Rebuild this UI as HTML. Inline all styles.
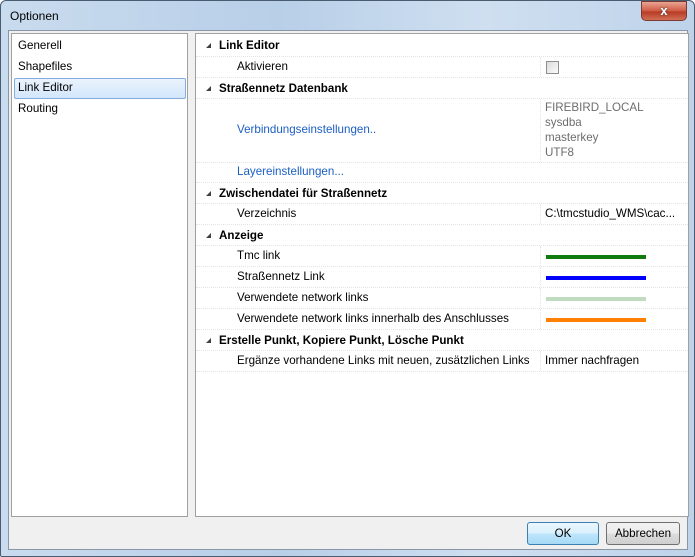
<!DOCTYPE html>
<html><head><meta charset="utf-8"><style>
*{margin:0;padding:0;box-sizing:border-box}
body{width:695px;height:557px;overflow:hidden;background:#fff;font-family:"Liberation Sans",sans-serif;font-size:11.6px;color:#000;position:relative}
.frame{position:absolute;left:0;top:0;width:695px;height:557px;border:1px solid #4a5c70;border-radius:6px 6px 2px 2px;background:linear-gradient(90deg,#c9dbee 0%,#b8cfe8 40%,#cfdff0 70%,#bed3ea 100%)}
.title{position:absolute;left:10px;top:9px;font-size:12px;color:#000}
.close{position:absolute;left:641px;top:1px;width:46px;height:20px;border:1px solid #7b3a32;border-radius:0 0 5px 5px;background:linear-gradient(#e8a493,#cf5a43 50%,#b83a25 55%,#d16f55);color:#fff;font-weight:bold;font-size:13px;text-align:center;line-height:17px;text-shadow:0 0 2px #333}
.client{position:absolute;left:8px;top:30px;width:680px;height:520px;background:#f0f0f0;border:1px solid #8896a8}
.list{position:absolute;left:11px;top:33px;width:177px;height:484px;background:#fff;border:1px solid #a0a0a0}
.li{position:absolute;left:6px;height:20px;line-height:20px}
.sel{position:absolute;left:2px;top:44px;width:172px;height:21px;border:1px solid #84acdd;border-radius:2px;background:linear-gradient(#eaf3fd,#d3e6fb)}
.panel{position:absolute;left:195px;top:33px;width:494px;height:484px;background:#fff;border:1px solid #a0a0a0}
.row{position:absolute;left:0;width:492px;border-bottom:1px dotted #e4e4e4}
.h{font-weight:bold;padding-left:23px;line-height:21px}
.h:before{content:"";position:absolute;left:10px;top:8px;border-left:5px solid transparent;border-bottom:5px solid #404040}
.lab{position:absolute;left:41px}
.val{position:absolute;left:344px;top:0;bottom:0;border-left:1px dotted #e4e4e4;padding-left:4px}
.link{color:#1c5fc2}
.line{position:absolute;left:350px;width:100px;height:4px}
.btn{position:absolute;top:522px;height:23px;border:1px solid #707070;border-radius:3px;background:linear-gradient(#f2f2f2,#ebebeb 50%,#dddddd 51%,#cfcfcf);text-align:center;line-height:21px}
</style></head><body>
<div class="frame"></div>
<div class="title">Optionen</div>
<div class="close">x</div>
<div class="client"></div>
<div class="list">
<div class="sel"></div>
<div class="li" style="top:2px">Generell</div>
<div class="li" style="top:23px">Shapefiles</div>
<div class="li" style="top:44px">Link Editor</div>
<div class="li" style="top:65px">Routing</div>
</div>
<div class="panel">
<div class="row h" style="top:1px;height:22px">Link Editor</div>
<div class="row" style="top:23px;height:21px"><span class="lab" style="top:3px">Aktivieren</span><div class="val"><div style="position:absolute;left:5px;top:4px;width:13px;height:13px;border:1px solid #8e8f8f;background:linear-gradient(135deg,#dcdcdc,#fafafa)"></div></div></div>
<div class="row h" style="top:44px;height:21px">Straßennetz Datenbank</div>
<div class="row" style="top:65px;height:64px"><span class="lab link" style="top:24px">Verbindungseinstellungen..</span><div class="val" style="color:#6d6d6d;line-height:15px;padding-top:1px">FIREBIRD_LOCAL<br>sysdba<br>masterkey<br>UTF8</div></div>
<div class="row" style="top:129px;height:20px"><span class="lab link" style="top:2px">Layereinstellungen...</span></div>
<div class="row h" style="top:149px;height:21px">Zwischendatei für Straßennetz</div>
<div class="row" style="top:170px;height:21px"><span class="lab" style="top:3px">Verzeichnis</span><div class="val" style="line-height:20px">C:\tmcstudio_WMS\cac...</div></div>
<div class="row h" style="top:191px;height:21px">Anzeige</div>
<div class="row" style="top:212px;height:21px"><span class="lab" style="top:3px">Tmc link</span><div class="val"></div><div class="line" style="top:9px;background:#107c10"></div></div>
<div class="row" style="top:233px;height:21px"><span class="lab" style="top:3px">Straßennetz Link</span><div class="val"></div><div class="line" style="top:9px;background:#0000ff"></div></div>
<div class="row" style="top:254px;height:21px"><span class="lab" style="top:3px">Verwendete network links</span><div class="val"></div><div class="line" style="top:9px;background:#c0dcc0"></div></div>
<div class="row" style="top:275px;height:21px"><span class="lab" style="top:3px">Verwendete network links innerhalb des Anschlusses</span><div class="val"></div><div class="line" style="top:9px;background:#ff8000"></div></div>
<div class="row h" style="top:296px;height:21px">Erstelle Punkt, Kopiere Punkt, Lösche Punkt</div>
<div class="row" style="top:317px;height:21px"><span class="lab" style="top:3px">Ergänze vorhandene Links mit neuen, zusätzlichen Links</span><div class="val" style="line-height:20px">Immer nachfragen</div></div>
</div>
<div class="btn" style="left:527px;width:72px;border-color:#3c7fb1;background:linear-gradient(#eaf6fd,#d9f0fc 50%,#bee6fd 51%,#a7d9f5)">OK</div>
<div class="btn" style="left:606px;width:74px">Abbrechen</div>
</body></html>
